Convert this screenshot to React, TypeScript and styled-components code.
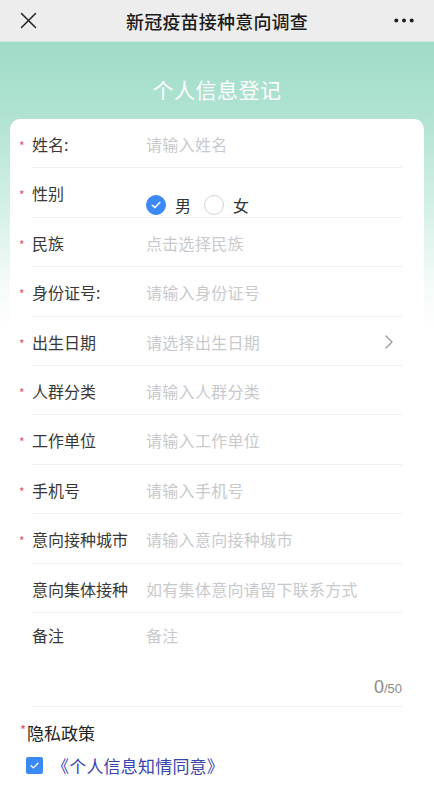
import React from "react";
import styled, { createGlobalStyle } from "styled-components";

const Global = createGlobalStyle`
  html, body { margin: 0; padding: 0; background: #fff; }
  body { font-family: "Noto Sans CJK SC", "Noto Sans", sans-serif; -webkit-font-smoothing: antialiased; }
  * { box-sizing: border-box; }
`;

const Page = styled.div`
  width: 434px;
  min-height: 800px;
  background: #fff;
`;

const NavBar = styled.div`
  height: 42px;
  background: #ededed;
  display: grid;
  grid-template-columns: 56px 1fr 56px;
  align-items: center;
  border-bottom: 1px solid #cfe9df;
`;

const NavTitle = styled.div`
  text-align: center;
  font-size: 18px;
  font-weight: 500;
  color: #1b1b1b;
  letter-spacing: 0.2px;
`;

const NavIcon = styled.div<{ $align: "start" | "end" }>`
  display: flex;
  justify-content: ${(p) => (p.$align === "start" ? "flex-start" : "flex-end")};
  padding: ${(p) => (p.$align === "start" ? "0 0 0 20px" : "0 20px 0 0")};
  align-items: center;
`;

const Body = styled.div`
  background: linear-gradient(180deg, #9fdcc8 0px, #b2e3d3 80px, #d6f1e8 170px, #f4fbf8 240px, #ffffff 290px);
`;

const Banner = styled.div`
  height: 77px;
  display: flex;
  align-items: center;
  justify-content: center;
  padding-top: 16px;
  font-size: 21px;
  color: #ffffff;
  letter-spacing: 0.5px;
`;

const Card = styled.div`
  margin: 0 10px;
  background: #fff;
  border-radius: 10px 10px 0 0;
  padding: 0 22px;
`;

const Row = styled.div`
  position: relative;
  display: flex;
  align-items: flex-start;
  min-height: 49.4px;
  padding-top: 14px;
  border-bottom: 1px solid #f1f1f1;
`;

const Required = styled.span`
  position: absolute;
  left: -13px;
  top: 19px;
  color: #e0526a;
  font-size: 12px;
  line-height: 16px;
`;

const Label = styled.div`
  width: 114px;
  flex-shrink: 0;
  font-size: 16px;
  line-height: 22px;
  color: #383838;
`;

const Placeholder = styled.div`
  flex: 1;
  font-size: 16px;
  line-height: 22px;
  color: #c8c9cc;
  letter-spacing: 0.3px;
`;

const Chevron = styled.div`
  width: 14px;
  display: flex;
  align-items: center;
  height: 22px;
  margin-right: 3px;
`;

const RadioGroup = styled.div`
  display: flex;
  align-items: center;
  margin-top: 12px;
`;

const RadioItem = styled.div`
  display: flex;
  align-items: center;
  margin-right: 13px;
`;

const RadioCircle = styled.span<{ $on?: boolean }>`
  width: 20px;
  height: 20px;
  border-radius: 50%;
  display: inline-flex;
  align-items: center;
  justify-content: center;
  background: ${(p) => (p.$on ? "#3b89f5" : "#fff")};
  border: 1px solid ${(p) => (p.$on ? "#3b89f5" : "#d4d4d4")};
`;

const RadioText = styled.span`
  margin-left: 9px;
  font-size: 16px;
  color: #333;
  line-height: 22px;
`;

const RemarkRow = styled.div`
  position: relative;
  display: flex;
  flex-direction: column;
  padding-top: 11px;
  min-height: 94px;
  border-bottom: 1px solid #f1f1f1;
`;

const RemarkTop = styled.div`
  display: flex;
`;

const Counter = styled.div`
  margin-top: 30px;
  text-align: right;
  color: #8a8a8a;
  font-family: "Liberation Sans", Arial, sans-serif;
  font-size: 18px;
  line-height: 22px;
`;

const CounterSmall = styled.span`
  font-size: 13px;
`;

const Privacy = styled.div`
  padding: 14px 0 0 20px;
`;

const PrivacyTitle = styled.div`
  font-size: 17px;
  line-height: 24px;
  color: #222;
  display: flex;
  align-items: flex-start;
`;

const Star = styled.span`
  color: #e0526a;
  font-size: 13px;
  line-height: 18px;
  margin-right: 1px;
`;

const Agree = styled.div`
  display: flex;
  align-items: center;
  margin-top: 8px;
  padding-left: 6px;
`;

const Box = styled.span`
  width: 17px;
  height: 17px;
  border-radius: 2px;
  background: #3b89f5;
  display: inline-flex;
  align-items: center;
  justify-content: center;
`;

const Link = styled.span`
  margin-left: 9px;
  font-size: 17px;
  color: #3843ad;
  letter-spacing: 0.2px;
`;

const fields: { label: string; ph: string; req: boolean; arrow?: boolean }[] = [
  { label: "身份证号:", ph: "请输入身份证号", req: true },
  { label: "出生日期", ph: "请选择出生日期", req: true, arrow: true },
  { label: "人群分类", ph: "请输入人群分类", req: true },
  { label: "工作单位", ph: "请输入工作单位", req: true },
  { label: "手机号", ph: "请输入手机号", req: true },
  { label: "意向接种城市", ph: "请输入意向接种城市", req: true },
  { label: "意向集体接种", ph: "如有集体意向请留下联系方式", req: false },
];

const Check = ({ size = 12 }: { size?: number }) => (
  <svg width={size} height={size} viewBox="0 0 12 12" fill="none">
    <path d="M2.3 6.2 L4.9 8.6 L9.8 3.6" stroke="#fff" strokeWidth="1.5" strokeLinecap="round" strokeLinejoin="round" />
  </svg>
);

export default function App() {
  return (
    <Page>
      <Global />
      <NavBar>
        <NavIcon $align="start">
          <svg width="17" height="17" viewBox="0 0 17 17">
            <path d="M1.5 1.5 L15.5 15.5 M15.5 1.5 L1.5 15.5" stroke="#222" strokeWidth="1.5" strokeLinecap="round" />
          </svg>
        </NavIcon>
        <NavTitle>新冠疫苗接种意向调查</NavTitle>
        <NavIcon $align="end">
          <svg width="20" height="5" viewBox="0 0 20 5">
            <circle cx="2.3" cy="2.5" r="2" fill="#222" />
            <circle cx="10" cy="2.5" r="2" fill="#222" />
            <circle cx="17.7" cy="2.5" r="2" fill="#222" />
          </svg>
        </NavIcon>
      </NavBar>
      <Body>
        <Banner>个人信息登记</Banner>
        <Card>
          <Row>
            <Required>*</Required>
            <Label>姓名:</Label>
            <Placeholder>请输入姓名</Placeholder>
          </Row>
          <Row>
            <Required>*</Required>
            <Label>性别</Label>
            <RadioGroup>
              <RadioItem>
                <RadioCircle $on>
                  <Check />
                </RadioCircle>
                <RadioText>男</RadioText>
              </RadioItem>
              <RadioItem>
                <RadioCircle />
                <RadioText>女</RadioText>
              </RadioItem>
            </RadioGroup>
          </Row>
          <Row>
            <Required>*</Required>
            <Label>民族</Label>
            <Placeholder>点击选择民族</Placeholder>
          </Row>
          {fields.map((f) => (
            <Row key={f.label}>
              {f.req && <Required>*</Required>}
              <Label>{f.label}</Label>
              <Placeholder>{f.ph}</Placeholder>
              {f.arrow && (
                <Chevron>
                  <svg width="8" height="14" viewBox="0 0 8 14">
                    <path d="M1 1 L7 7 L1 13" stroke="#9a9a9a" strokeWidth="1.3" fill="none" strokeLinecap="round" strokeLinejoin="round" />
                  </svg>
                </Chevron>
              )}
            </Row>
          ))}
          <RemarkRow>
            <RemarkTop>
              <Label>备注</Label>
              <Placeholder>备注</Placeholder>
            </RemarkTop>
            <Counter>
              0<CounterSmall>/50</CounterSmall>
            </Counter>
          </RemarkRow>
        </Card>
        <Privacy>
          <PrivacyTitle>
            <Star>*</Star>
            隐私政策
          </PrivacyTitle>
          <Agree>
            <Box>
              <Check size={11} />
            </Box>
            <Link>《个人信息知情同意》</Link>
          </Agree>
        </Privacy>
      </Body>
    </Page>
  );
}
